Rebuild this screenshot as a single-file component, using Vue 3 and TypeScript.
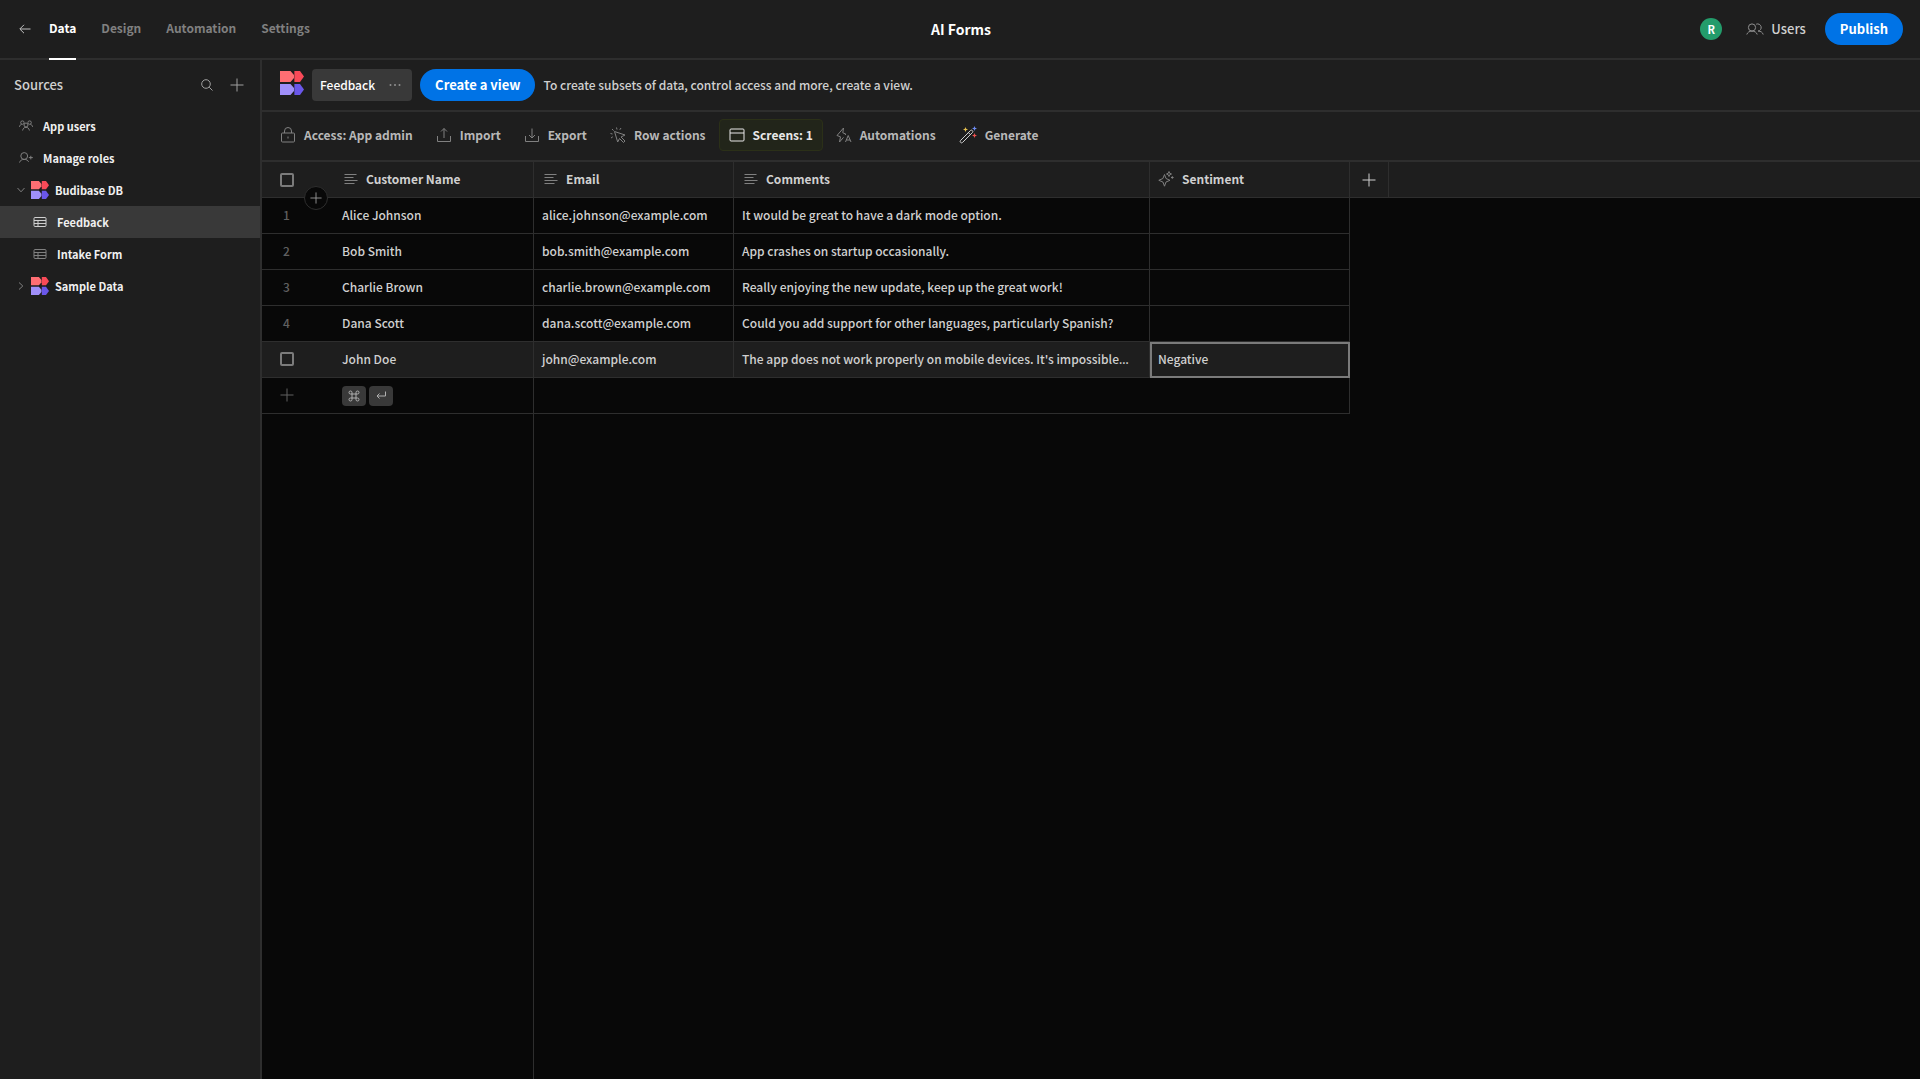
<script setup lang="ts">
import { ref } from 'vue'

interface Row {
  name: string
  email: string
  comments: string
  sentiment: string
  clipped?: boolean
}

const tabs = ['Data', 'Design', 'Automation', 'Settings']
const activeTab = ref('Data')

const rows: Row[] = [
  { name: 'Alice Johnson', email: 'alice.johnson@example.com', comments: 'It would be great to have a dark mode option.', sentiment: '' },
  { name: 'Bob Smith', email: 'bob.smith@example.com', comments: 'App crashes on startup occasionally.', sentiment: '' },
  { name: 'Charlie Brown', email: 'charlie.brown@example.com', comments: 'Really enjoying the new update, keep up the great work!', sentiment: '' },
  { name: 'Dana Scott', email: 'dana.scott@example.com', comments: 'Could you add support for other languages, particularly Spanish?', sentiment: '' },
  { name: 'John Doe', email: 'john@example.com', comments: "The app does not work properly on mobile devices. It's impossible", sentiment: 'Negative', clipped: true },
]
const activeRow = ref(4)
const columns = ['Customer Name', 'Email', 'Comments']
</script>

<template>
  <div class="app">
    <svg class="defs" width="0" height="0" aria-hidden="true">
      <symbol id="logo" viewBox="0 0 24 24">
        <path fill="#ff6e73" d="M0 0h10.500l3.500 4v3L10.500 11H0z" />
        <path fill="#f94a58" d="M14.400 0h5.600l4 5.500-4 5.500h-5.600z" />
        <path fill="#9f8ff9" d="M0 13h10.500l3.500 4v3L10.500 24H0z" />
        <path fill="#6a57ea" d="M14.400 13h5.600l4 5.500-4 5.500h-5.600z" />
      </symbol>
      <symbol id="plus" viewBox="0 0 14 14">
        <path d="M7 0.5v13M0.5 7h13" />
      </symbol>
      <symbol id="grid-table" viewBox="0 0 14 12">
        <rect x="1" y="1.5" width="12" height="9" rx="1" />
        <path d="M1 4.5h12M1 7.5h12M5 4.5v6" />
      </symbol>
      <symbol id="lines" viewBox="0 0 14 12">
        <path d="M0.5 1.5h12M0.5 4.5h9M0.5 7.5h13M0.5 10.5h10" />
      </symbol>
    </svg>

    <header class="topbar">
      <div class="left">
        <button class="back" aria-label="Back">
          <svg width="12" height="10" viewBox="0 0 12 10"><path d="M11.5 5H1M5 0.8L0.8 5L5 9.2" /></svg>
        </button>
        <nav class="tabs">
          <a v-for="tab in tabs" :key="tab" href="#" :class="['tab', { active: tab === activeTab }]" @click.prevent="activeTab = tab">{{ tab }}</a>
        </nav>
      </div>
      <h1 class="title">AI Forms</h1>
      <div class="account">
        <span class="avatar">R</span>
        <button class="users">
          <svg width="18" height="12" viewBox="0 0 18 12">
            <circle cx="6" cy="4.5" r="3.6" />
            <path d="M0.8 11.5C1.4 9.4 3.4 8.1 6 8.1s4.6 1.3 5.2 3.4M10.2 1.2A3.6 3.6 0 1 1 12 8.1M12.2 8.1c2.6 0 4.4 1.3 5 3.4" />
          </svg>
          Users
        </button>
        <button class="primary">Publish</button>
      </div>
    </header>

    <div class="body">
      <aside class="sidebar">
        <div class="sources">
          <h2>Sources</h2>
          <button aria-label="Search">
            <svg width="12" height="12" viewBox="0 0 12 12"><circle cx="5" cy="5" r="4.3" /><path d="M8.2 8.2l3.3 3.3" /></svg>
          </button>
          <button aria-label="Add source">
            <svg width="14" height="14"><use href="#plus" /></svg>
          </button>
        </div>
        <nav class="tree">
          <a href="#" class="item top">
            <svg width="14" height="11" viewBox="0 0 14 11">
              <circle cx="7" cy="5" r="2" /><circle cx="3.4" cy="2.6" r="1.7" /><circle cx="10.6" cy="2.6" r="1.7" />
              <path d="M3.6 10.5C4 8.4 5.2 7.3 7 7.3s3 1.1 3.4 3.2M0.4 6.8C0.7 5.4 1.5 4.6 2.6 4.4M13.6 6.8c-.3-1.4-1.1-2.2-2.2-2.4" />
            </svg>
            App users
          </a>
          <a href="#" class="item top">
            <svg width="14" height="11" viewBox="0 0 14 11">
              <circle cx="5.2" cy="4" r="3.4" />
              <path d="M0.5 10.5C1 8.6 2.8 7.4 5.2 7.4s3.7.9 4.4 2.4M9.8 5.6h4M11.8 3.8v3.6" />
            </svg>
            Manage roles
          </a>
          <a href="#" class="item db">
            <svg class="chevron" width="8" height="8" viewBox="0 0 8 8"><path d="M0.5 2L4 5.8L7.5 2" /></svg>
            <svg class="logo" width="18" height="18"><use href="#logo" /></svg>
            Budibase DB
          </a>
          <a href="#" class="item table selected">
            <svg width="14" height="12"><use href="#grid-table" /></svg>
            Feedback
          </a>
          <a href="#" class="item table">
            <svg width="14" height="12"><use href="#grid-table" /></svg>
            Intake Form
          </a>
          <a href="#" class="item db">
            <svg class="chevron" width="8" height="8" viewBox="0 0 8 8"><path d="M2 0.5L5.8 4L2 7.5" /></svg>
            <svg class="logo" width="18" height="18"><use href="#logo" /></svg>
            Sample Data
          </a>
        </nav>
      </aside>

      <main class="main">
        <div class="viewbar">
          <svg class="logo" width="24" height="24"><use href="#logo" /></svg>
          <button class="current">
            Feedback
            <svg width="12" height="4" viewBox="0 0 12 4"><circle cx="1.5" cy="2" r="1" /><circle cx="6" cy="2" r="1" /><circle cx="10.5" cy="2" r="1" /></svg>
          </button>
          <button class="primary">Create a view</button>
          <p>To create subsets of data, control access and more, create a view.</p>
        </div>

        <div class="toolbar">
          <button class="tool">
            <svg width="16" height="16" viewBox="0 0 16 16"><rect x="1.5" y="6" width="13" height="9" rx="1" /><path d="M4.5 6V4a3.5 3.5 0 0 1 7 0v2M8 9.5v2" /></svg>
            Access: App admin
          </button>
          <button class="tool">
            <svg width="16" height="16" viewBox="0 0 16 16"><path d="M1.5 9v5.5h13V9M8 11V1.5M5 4.5l3-3l3 3" /></svg>
            Import
          </button>
          <button class="tool">
            <svg width="16" height="16" viewBox="0 0 16 16"><path d="M1.5 9v5.5h13V9M8 1.5V11M5 8l3 3l3-3" /></svg>
            Export
          </button>
          <button class="tool">
            <svg width="16" height="16" viewBox="0 0 16 16"><path d="M4.500 4.500l10.500 3.500-4 2 4 4-1.500 1.500-4-4-1.800 3.500zM6.500 0.500l.5 2M2 2l1.600 1.600M0.500 6.500l2 .5M11 1L9.800 2.800M1 11l1.800-1.200" /></svg>
            Row actions
          </button>
          <button class="tool lit">
            <svg width="16" height="16" viewBox="0 0 16 16"><rect x="1" y="2" width="14" height="12" rx="1" /><path d="M1 6h14" /></svg>
            Screens: 1
          </button>
          <button class="tool">
            <svg width="16" height="16" viewBox="0 0 16 16"><path d="M7.5 1L1 8.5l3.5 1.3L3.5 15l4-4.6M7.5 1L6.8 5.8l3 1.2L9 8M9.5 15l2.7-6.5L15 15M10.5 13h3.6" /></svg>
            Automations
          </button>
          <button class="tool">
            <svg width="18" height="18" viewBox="0 0 18 18">
              <path class="wand" d="M1.6 14.4L11.4 4.6a1.4 1.4 0 0 1 2 2L3.6 16.4a1.4 1.4 0 0 1-2-2zM9.4 6.6l2 2" />
              <path fill="#e5c04f" stroke="none" d="M6.5 1l.7 1.8L9 3.5l-1.8.7L6.5 6l-.7-1.8L4 3.5l1.8-.7z" />
              <path fill="#6f8cf2" stroke="none" d="M15.5 0l.7 1.8 1.8.7-1.8.7-.7 1.8-.7-1.8-1.8-.7 1.8-.7z" />
              <path fill="#ee5350" stroke="none" d="M15.5 7l.7 1.8 1.8.7-1.8.7-.7 1.8-.7-1.8L13 9.500l1.800-.7z" />
            </svg>
            Generate
          </button>
        </div>

        <div class="grid">
          <table>
            <colgroup>
              <col class="c-gutter" /><col class="c-field" /><col class="c-field" /><col class="c-wide" /><col class="c-field" /><col class="c-add" /><col />
            </colgroup>
            <thead>
              <tr>
                <th class="gutter">
                  <input type="checkbox" aria-label="Select all rows" />
                  <button class="insert" aria-label="Insert row"><svg width="12" height="12" viewBox="0 0 14 14"><use href="#plus" /></svg></button>
                </th>
                <th v-for="column in columns" :key="column">
                  <span class="label"><svg width="14" height="12"><use href="#lines" /></svg>{{ column }}</span>
                </th>
                <th>
                  <span class="label ai">
                    <svg width="16" height="16" viewBox="0 0 16 16">
                      <path d="M6.500 3.500l1.500 4 4 1.800-4 1.700-1.500 4.200-1.600-4.200L0.800 9.300l4.100-1.800zM11 0.500l.7 1.800 1.800.7-1.800.7-.7 1.800-.7-1.800L8.500 3l1.800-.7zM14.300 5.200v2.600M13 6.500h2.600" />
                    </svg>Sentiment
                  </span>
                </th>
                <th class="add"><button aria-label="Add column"><svg width="14" height="14"><use href="#plus" /></svg></button></th>
                <th class="rest"></th>
              </tr>
            </thead>
            <tbody>
              <tr v-for="(row, i) in rows" :key="row.email" :class="{ hovered: i === activeRow }">
                <td class="gutter">
                  <input v-if="i === activeRow" type="checkbox" :aria-label="'Select ' + row.name" />
                  <template v-else>{{ i + 1 }}</template>
                </td>
                <td>{{ row.name }}</td>
                <td>{{ row.email }}</td>
                <td>{{ row.comments }}<span v-if="row.clipped" class="more">…</span></td>
                <td :class="{ focused: i === activeRow }">{{ row.sentiment }}</td>
              </tr>
              <tr>
                <td class="gutter"><button aria-label="Add row"><svg width="14" height="14"><use href="#plus" /></svg></button></td>
                <td>
                  <span class="keys">
                    <kbd><svg width="12" height="12" viewBox="0 0 12 12"><path d="M4 4h4v4H4zM4 4H2.500A1.500 1.500 0 1 1 4 2.500zM8 4V2.500A1.500 1.500 0 1 1 9.500 4zM8 8h1.500A1.500 1.500 0 1 1 8 9.500zM4 8v1.500A1.500 1.500 0 1 1 2.500 8z" /></svg></kbd>
                    <kbd><svg width="12" height="12" viewBox="0 0 12 12"><path d="M10.500 1.500V6H2M4.500 3.500L2 6l2.500 2.500" /></svg></kbd>
                  </span>
                </td>
                <td class="blank"></td>
                <td class="blank"></td>
                <td></td>
              </tr>
            </tbody>
          </table>
          <div class="below"></div>
        </div>
      </main>
    </div>
  </div>
</template>

<style>
body {
  background: #080808;
}
</style>

<style scoped>
.app {
  display: flex;
  flex-direction: column;
  min-height: 100vh;
  background: #1e1e1e;
  color: #d0d0d0;
  font-family: "Noto Sans CJK SC", "Noto Sans", sans-serif;
  font-size: 12px;
  font-weight: 500;
  line-height: 18px;
}
* {
  box-sizing: border-box;
}
.defs {
  position: absolute;
}
svg {
  flex: none;
  fill: none;
  stroke: currentColor;
}
.logo {
  stroke: none;
}
button {
  display: flex;
  align-items: center;
  justify-content: center;
  margin: 0;
  padding: 0;
  border: 0;
  background: none;
  color: inherit;
  font: inherit;
}
a {
  color: inherit;
  text-decoration: none;
}
.topbar {
  display: grid;
  grid-template-columns: 1fr auto 1fr;
  height: 60px;
  padding: 0 17px 0 19px;
  border-bottom: 2px solid #2e2e2e;
}
.left {
  display: flex;
  gap: 18px;
}
.tabs {
  display: flex;
  gap: 25px;
  margin-bottom: -2px;
}
.tab {
  padding-top: 19px;
  color: #808080;
  font-weight: 700;
}
.tab.active {
  border-bottom: 2px solid #fff;
  color: #fff;
}
.title {
  margin: 0;
  padding-bottom: 1px;
  align-self: center;
  color: #fff;
  font-size: 14px;
  font-weight: 700;
}
.account {
  display: flex;
  align-items: center;
  justify-content: flex-end;
}
.avatar {
  width: 22px;
  height: 22px;
  border-radius: 50%;
  background: #239c6b;
  color: #fff;
  font-size: 11px;
  font-weight: 700;
  line-height: 22px;
  text-align: center;
}
.users {
  gap: 7px;
  margin: 0 19px 0 24px;
  font-size: 13px;
}
.users svg {
  color: #909090;
}
.back svg {
  color: #c0c0c0;
}
.primary {
  height: 32px;
  padding: 0 15px 1px;
  border-radius: 16px;
  background: #0073e6;
  color: #fff;
  font-size: 13px;
  font-weight: 700;
}
.body {
  display: flex;
  flex: 1;
}
.sidebar {
  flex: none;
  width: 262px;
  border-right: 2px solid #2e2e2e;
}
.sources {
  display: flex;
  align-items: center;
  gap: 17px;
  height: 50px;
  padding: 0 16px 1px 14px;
}
.sources h2 {
  flex: 1;
  margin: 0;
  font-size: 13px;
  font-weight: 500;
}
.sources button {
  color: #a0a0a0;
}
.item {
  display: flex;
  align-items: center;
  height: 32px;
  padding-bottom: 1px;
  color: #f0f0f0;
  font-size: 11px;
  font-weight: 700;
}
.item > svg:not(.logo) {
  color: #808080;
}
.top {
  gap: 10px;
  padding-left: 19px;
}
.db {
  gap: 6px;
  padding-left: 17px;
}
.table {
  gap: 10px;
  padding-left: 33px;
}
.selected {
  background: #393939;
}
.item.selected > svg {
  color: #d0d0d0;
}
.main {
  display: flex;
  flex: 1;
  flex-direction: column;
  min-width: 0;
}
.viewbar {
  display: flex;
  align-items: center;
  gap: 8px;
  height: 52px;
  padding: 0 18px;
  border-bottom: 2px solid #2e2e2e;
}
.viewbar .logo {
  margin-bottom: 4px;
}
.viewbar p {
  margin: 0;
}
.current {
  gap: 14px;
  height: 32px;
  padding: 0 11px 0 8px;
  border-radius: 4px;
  background: #393939;
  color: #fff;
}
.current svg {
  fill: #909090;
  stroke: none;
}
.toolbar {
  display: flex;
  align-items: center;
  gap: 3px;
  height: 50px;
  padding: 0 8px 2px;
  border-bottom: 2px solid #2e2e2e;
}
.tool {
  gap: 8px;
  height: 32px;
  padding: 0 9px;
  border: 1px solid transparent;
  border-radius: 4px;
  color: #b8b8b8;
  font-weight: 700;
}
.tool svg {
  color: #808080;
}
.tool .wand {
  stroke: #d0d0d0;
}
.lit,
.tool.lit svg {
  color: #e8e8e8;
}
.lit {
  border-color: #2b3018;
  background: #22251a;
}
.grid {
  display: flex;
  flex: 1;
  flex-direction: column;
  background: #080808;
}
table {
  width: 100%;
  border-spacing: 0;
  table-layout: fixed;
}
.c-gutter {
  width: 72px;
}
.c-field {
  width: 200px;
}
.c-wide {
  width: 416px;
}
.c-add {
  width: 39px;
}
th,
td {
  height: 36px;
  padding: 0 8px 1px;
  border-right: 1px solid #2e2e2e;
  border-bottom: 1px solid #2e2e2e;
  overflow: hidden;
  text-align: left;
  text-overflow: ellipsis;
  white-space: nowrap;
}
th {
  background: #1e1e1e;
  font-weight: 700;
}
.rest,
.gutter,
.blank {
  border-right: 0;
}
.gutter {
  position: relative;
  padding: 0 0 0 18px;
  overflow: visible;
}
td.gutter {
  padding: 0 0 1px 21px;
  color: #606060;
}
.hovered td.gutter,
tr:last-child td.gutter {
  padding-left: 18px;
}
.label {
  display: flex;
  align-items: center;
  gap: 8px;
  padding-left: 2px;
}
.label svg {
  color: #808080;
}
.label.ai {
  padding-left: 0;
}
.add {
  padding: 0;
}
.add button {
  width: 100%;
}
.hovered td {
  background: #1e1e1e;
}
.hovered td.focused {
  outline: 2px solid #7b7b7b;
  outline-offset: -2px;
}
.more {
  font-family: "Noto Sans", sans-serif;
}
input {
  display: block;
  width: 14px;
  height: 14px;
  margin: 0;
  border: 2px solid #7b7b7b;
  border-radius: 2px;
  appearance: none;
}
.insert {
  position: absolute;
  left: 42px;
  top: 24px;
  width: 24px;
  height: 24px;
  border: 1px solid #2e2e2e;
  border-radius: 50%;
  background: #080808;
  color: #a0a0a0;
}
.keys {
  display: flex;
  gap: 3px;
  padding-top: 2px;
}
kbd {
  display: flex;
  align-items: center;
  justify-content: center;
  width: 24px;
  height: 20px;
  border-radius: 4px;
  background: #393939;
  color: #b0b0b0;
}
.below {
  flex: 1;
  width: 272px;
  border-right: 1px solid #2e2e2e;
}
</style>
